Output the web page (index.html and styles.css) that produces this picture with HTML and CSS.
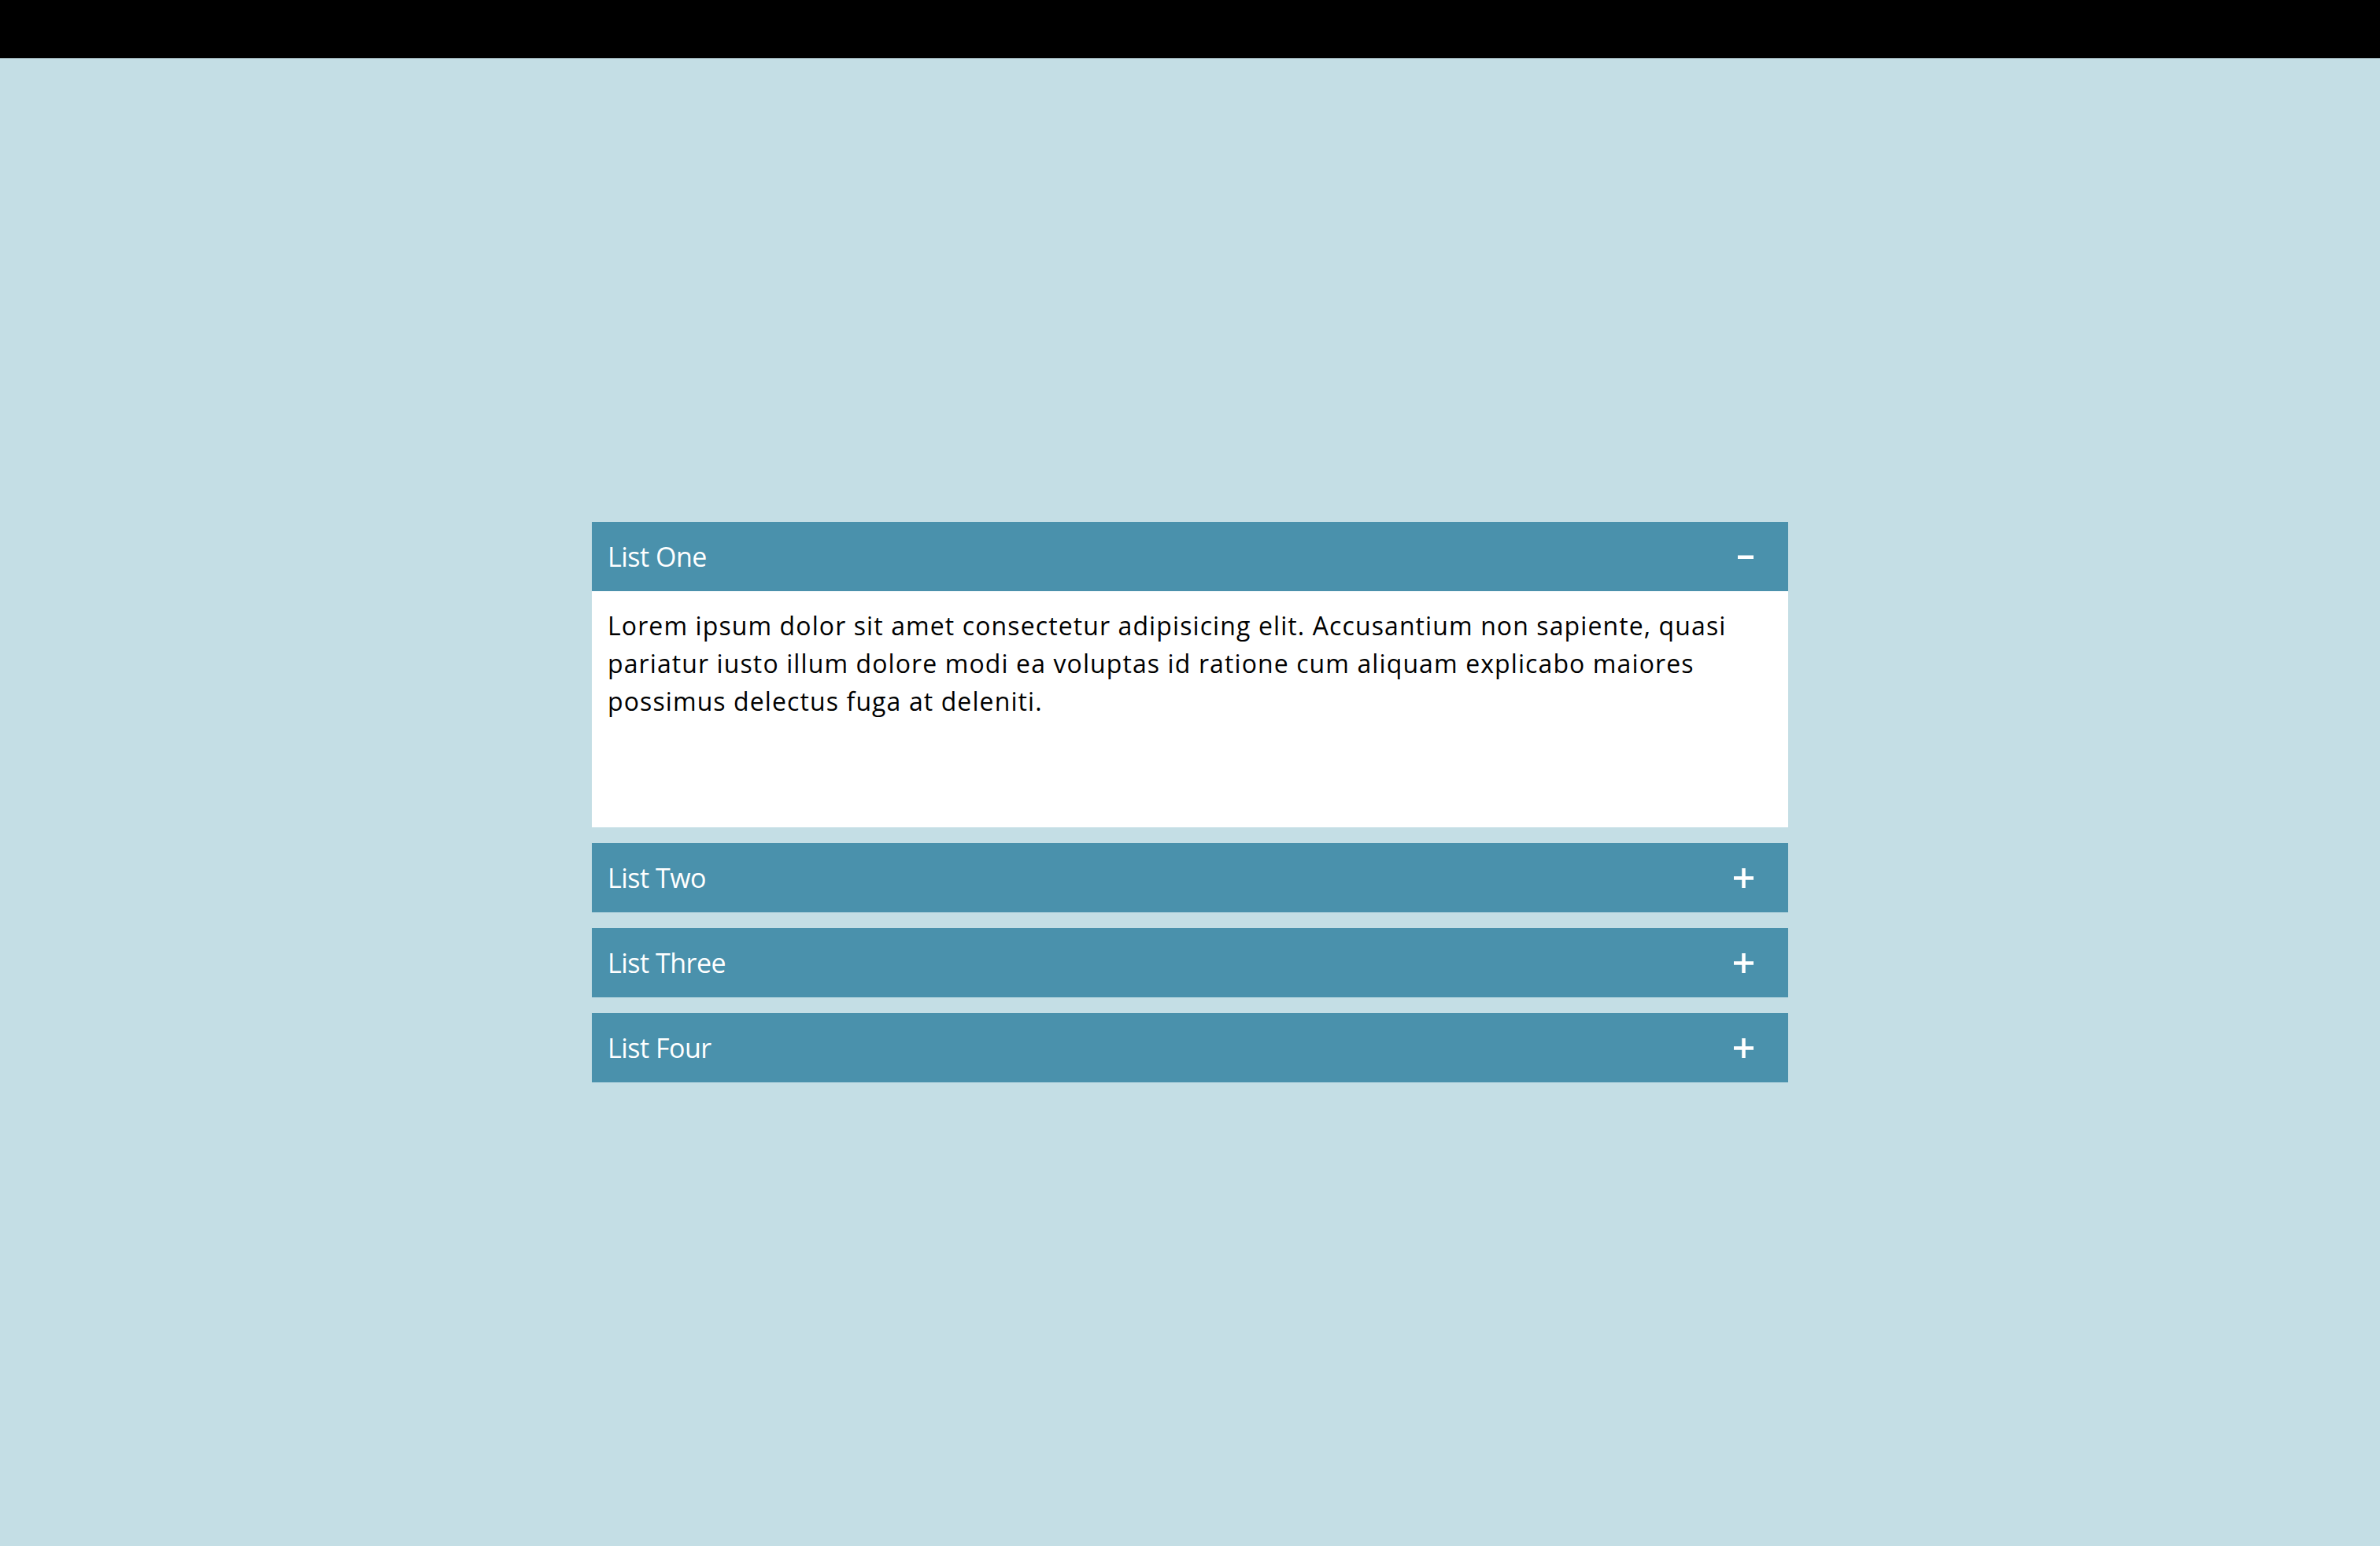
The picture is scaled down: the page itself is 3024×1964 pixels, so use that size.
FILE: index.html
```html
<!DOCTYPE html>
<html lang="en">
<head>
<meta charset="utf-8">
<title>Accordion</title>
<link rel="stylesheet" href="styles.css">
</head>
<body>
<div class="topbar"></div>
<main class="stage">
  <div class="accordion">
    <div class="item open">
      <div class="head">
        <span class="title">List One</span>
        <svg class="icon" width="25" height="25" viewBox="0 0 25 25"><rect x="5" y="10.5" width="20" height="4.5" fill="#fff"/></svg>
      </div>
      <div class="body">
        <p class="text">Lorem ipsum dolor sit amet consectetur adipisicing elit. Accusantium non sapiente, quasi pariatur iusto illum dolore modi ea voluptas id ratione cum aliquam explicabo maiores possimus delectus fuga at deleniti.</p>
      </div>
    </div>
    <div class="item">
      <div class="head">
        <span class="title">List Two</span>
        <svg class="icon" width="25" height="25" viewBox="0 0 25 25"><rect x="0" y="10.25" width="25" height="4.5" fill="#fff"/><rect x="10.25" y="0" width="4.5" height="25" fill="#fff"/></svg>
      </div>
    </div>
    <div class="item">
      <div class="head">
        <span class="title">List Three</span>
        <svg class="icon" width="25" height="25" viewBox="0 0 25 25"><rect x="0" y="10.25" width="25" height="4.5" fill="#fff"/><rect x="10.25" y="0" width="4.5" height="25" fill="#fff"/></svg>
      </div>
    </div>
    <div class="item">
      <div class="head">
        <span class="title">List Four</span>
        <svg class="icon" width="25" height="25" viewBox="0 0 25 25"><rect x="0" y="10.25" width="25" height="4.5" fill="#fff"/><rect x="10.25" y="0" width="4.5" height="25" fill="#fff"/></svg>
      </div>
    </div>
  </div>
</main>
</body>
</html>
```
FILE: styles.css
```css
html, body {
  margin: 0;
  padding: 0;
}
body {
  background: #c4dee5;
  font-family: "Open Sans", "Noto Sans", sans-serif;
}
.topbar {
  height: 74px;
  background: #000;
}
.stage {
  height: calc(100vh - 74px);
  display: flex;
  align-items: center;
  justify-content: center;
}
.accordion {
  width: 1520px;
  display: flex;
  flex-direction: column;
  gap: 20px;
}
.head {
  height: 88px;
  box-sizing: border-box;
  background: #4a91ac;
  color: #fff;
  display: flex;
  align-items: center;
  justify-content: space-between;
  padding: 0 44px 0 20px;
}
.title {
  font-size: 34px;
  line-height: 1;
  letter-spacing: -0.5px;
}
.icon {
  display: block;
}
.body {
  background: #fff;
  height: 300px;
  box-sizing: border-box;
  padding: 20px;
}
.text {
  margin: 0;
  font-size: 32px;
  line-height: 48px;
  letter-spacing: 1.1px;
  color: #000;
}
```
